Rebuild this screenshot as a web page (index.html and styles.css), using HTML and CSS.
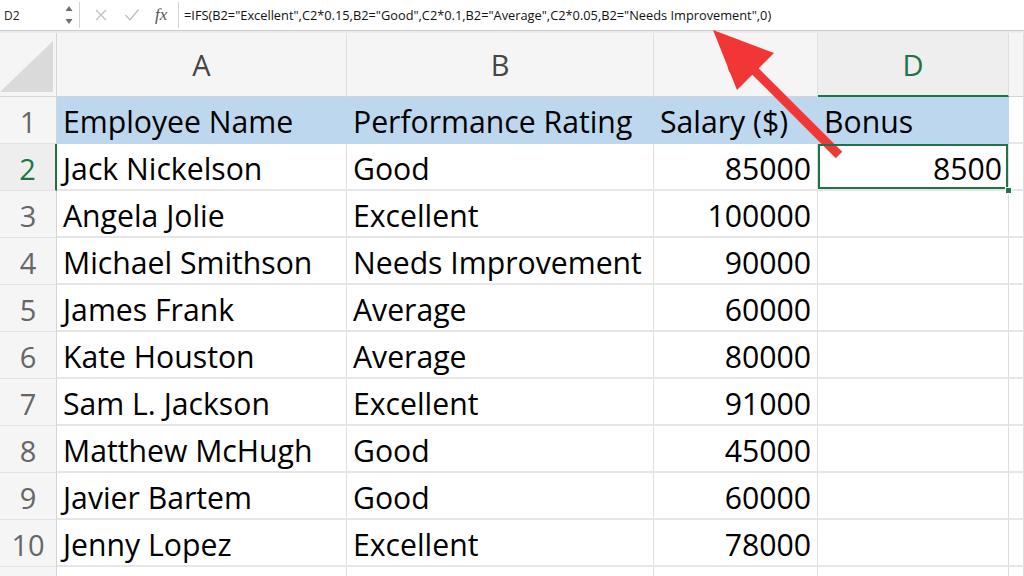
FILE: index.html
```html
<!DOCTYPE html>
<html lang="en">
<head>
    <meta charset="UTF-8">
    <title>Bonus sheet</title>
    <link rel="stylesheet" href="styles.css">
</head>
<body>
    <div class="formula-bar">
        <div class="name-box">
            <span class="cell-ref">D2</span>
            <svg class="spinner" width="8" height="20" viewBox="0 0 8 20">
                <path d="M4 1 L7.5 6 L0.5 6 Z" fill="#6e6e6e"/>
                <path d="M4 19 L7.5 14 L0.5 14 Z" fill="#6e6e6e"/>
            </svg>
        </div>
        <div class="bar-tools">
            <svg width="14" height="14" viewBox="0 0 14 14">
                <path d="M2 2 L12 12 M12 2 L2 12" stroke="#c2c2c2" stroke-width="1.4" fill="none"/>
            </svg>
            <svg width="16" height="14" viewBox="0 0 16 14">
                <path d="M1.5 7 L6 12 L14.5 1.5" stroke="#c2c2c2" stroke-width="1.4" fill="none"/>
            </svg>
            <span class="fx">fx</span>
        </div>
        <div class="formula">=IFS(B2="Excellent",C2*0.15,B2="Good",C2*0.1,B2="Average",C2*0.05,B2="Needs Improvement",0)</div>
    </div>

    <div class="sheet">
        <!-- column headers -->
        <div class="corner">
            <svg width="56" height="62" viewBox="0 0 56 62">
                <path d="M0 59 L53 8 L53 59 Z" fill="#dadada"/>
            </svg>
        </div>
        <div class="col-head">A</div>
        <div class="col-head">B</div>
        <div class="col-head">C</div>
        <div class="col-head active">D</div>
        <div class="col-head"></div>

        <!-- row 1 -->
        <div class="row-head">1</div>
        <div class="cell title">Employee Name</div>
        <div class="cell title">Performance Rating</div>
        <div class="cell title">Salary ($)</div>
        <div class="cell title">Bonus</div>
        <div class="cell"></div>

        <div class="row-head active">2</div>
        <div class="cell">Jack Nickelson</div>
        <div class="cell">Good</div>
        <div class="cell num">85000</div>
        <div class="cell num selected">8500<span class="handle"></span></div>
        <div class="cell"></div>

        <div class="row-head">3</div>
        <div class="cell">Angela Jolie</div>
        <div class="cell">Excellent</div>
        <div class="cell num">100000</div>
        <div class="cell"></div>
        <div class="cell"></div>

        <div class="row-head">4</div>
        <div class="cell">Michael Smithson</div>
        <div class="cell">Needs Improvement</div>
        <div class="cell num">90000</div>
        <div class="cell"></div>
        <div class="cell"></div>

        <div class="row-head">5</div>
        <div class="cell">James Frank</div>
        <div class="cell">Average</div>
        <div class="cell num">60000</div>
        <div class="cell"></div>
        <div class="cell"></div>

        <div class="row-head">6</div>
        <div class="cell">Kate Houston</div>
        <div class="cell">Average</div>
        <div class="cell num">80000</div>
        <div class="cell"></div>
        <div class="cell"></div>

        <div class="row-head">7</div>
        <div class="cell">Sam L. Jackson</div>
        <div class="cell">Excellent</div>
        <div class="cell num">91000</div>
        <div class="cell"></div>
        <div class="cell"></div>

        <div class="row-head">8</div>
        <div class="cell">Matthew McHugh</div>
        <div class="cell">Good</div>
        <div class="cell num">45000</div>
        <div class="cell"></div>
        <div class="cell"></div>

        <div class="row-head">9</div>
        <div class="cell">Javier Bartem</div>
        <div class="cell">Good</div>
        <div class="cell num">60000</div>
        <div class="cell"></div>
        <div class="cell"></div>

        <div class="row-head">10</div>
        <div class="cell">Jenny Lopez</div>
        <div class="cell">Excellent</div>
        <div class="cell num">78000</div>
        <div class="cell"></div>
        <div class="cell"></div>

        <!-- partly visible row 11 -->
        <div class="row-head"></div>
        <div class="cell"></div>
        <div class="cell"></div>
        <div class="cell"></div>
        <div class="cell"></div>
        <div class="cell"></div>
    </div>

    <!-- red callout arrow pointing at the formula -->
    <svg class="arrow" width="1024" height="576" viewBox="0 0 1024 576">
        <line x1="750" y1="66" x2="839" y2="155" stroke="#f23535" stroke-width="9"/>
        <polygon points="713,30 774,53 737,90" fill="#f23535"/>
    </svg>
</body>
</html>
```

FILE: styles.css
```css
html, body {
    margin: 0;
    padding: 0;
    background: #ffffff;
    width: 1024px;
    height: 576px;
    overflow: hidden;
    font-family: 'Open Sans', 'Noto Sans', sans-serif;
}
.formula-bar {
    display: flex;
    align-items: center;
    height: 30px;
    border-bottom: 1px solid #cbcbcb;
    background: #ffffff;
}
.name-box {
    display: flex;
    align-items: center;
    justify-content: space-between;
    width: 80px;
    height: 26px;
    box-sizing: border-box;
    padding: 0 6px 0 4px;
    border-right: 1px solid #d4d4d4;
}
.cell-ref {
    font-size: 12px;
    color: #222;
}
.bar-tools {
    display: flex;
    align-items: center;
    gap: 16px;
    width: 99px;
    height: 26px;
    box-sizing: border-box;
    padding-left: 14px;
    border-right: 1px solid #d4d4d4;
}
.fx {
    font-family: 'Liberation Serif', 'DejaVu Serif', serif;
    font-style: italic;
    font-size: 17px;
    color: #555;
    margin-left: -1px;
}
.formula {
    padding-left: 5px;
    font-size: 12.8px;
    color: #111;
    white-space: nowrap;
}
.sheet {
    display: grid;
    grid-template-columns: 57px 290px 307px 164px 191px 1fr;
    grid-template-rows: 64px repeat(11, 47px);
    border-top: 2px solid #ececec;
}
.corner {
    background: #f5f5f5;
    border-right: 1px solid #d6d6d6;
    border-bottom: 1px solid #d6d6d6;
}
.corner svg {
    display: block;
}
.col-head {
    background: #f5f5f5;
    border-right: 1px solid #e0e0e0;
    border-bottom: 1px solid #d4d4d4;
    text-align: center;
    font-size: 29px;
    line-height: 64px;
    color: #454545;
}
.col-head.active {
    background: #eeeeee;
    color: #217346;
    border-bottom: 2px solid #217346;
}
.row-head {
    background: #f5f5f5;
    border-right: 1px solid #d4d4d4;
    border-bottom: 1px solid #e2e2e2;
    text-align: center;
    font-size: 29px;
    line-height: 49px;
    color: #666;
    overflow: hidden;
}
.row-head.active {
    background: #eeeeee;
    color: #217346;
    border-right: 2px solid #217346;
}
.cell {
    position: relative;
    border-right: 1px solid #dedede;
    border-bottom: 2px solid #e6e6e6;
    padding: 0 6px;
    font-size: 30.2px;
    line-height: 49px;
    color: #000;
    white-space: nowrap;
}
.cell.title {
    background: #bdd7ee;
    border-right-color: #bdd7ee;
    border-bottom: 1px solid #bdd7ee;
}
.cell.num {
    text-align: right;
}
.cell.selected {
    box-shadow: inset 0 0 0 2px #217346;
    z-index: 2;
}
.handle {
    position: absolute;
    right: -4px;
    bottom: -5px;
    width: 5px;
    height: 5px;
    background: #217346;
    border: 1px solid #ffffff;
}
.arrow {
    position: absolute;
    top: 0;
    left: 0;
    pointer-events: none;
}
```
